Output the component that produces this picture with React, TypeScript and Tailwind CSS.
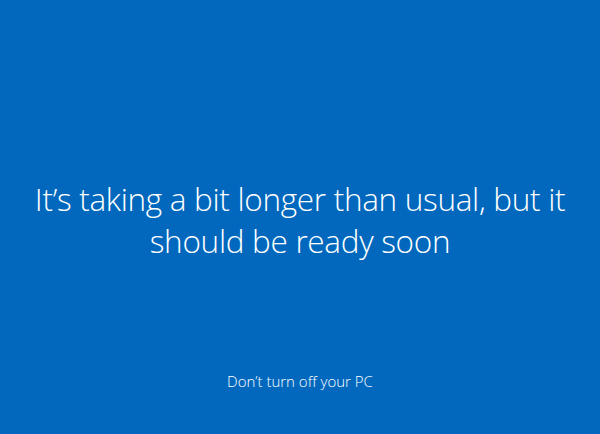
export default function App() {
  return (
    <div
      className="flex flex-col h-screen w-full bg-[#0168bd] text-white overflow-hidden"
      style={{ fontFamily: '"Open Sans", "Noto Sans", sans-serif' }}
    >
      <main className="flex-1 flex items-center justify-center px-4 pt-[68px]">
        <h1 className="text-center font-light text-[31.5px] leading-[42px] tracking-[-0.3px]">
          It’s taking a bit longer than usual, but it
          <br />
          should be ready soon
        </h1>
      </main>
      <footer className="pb-[43px] text-center font-light text-[15px] leading-5">
        Don’t turn off your PC
      </footer>
    </div>
  );
}
